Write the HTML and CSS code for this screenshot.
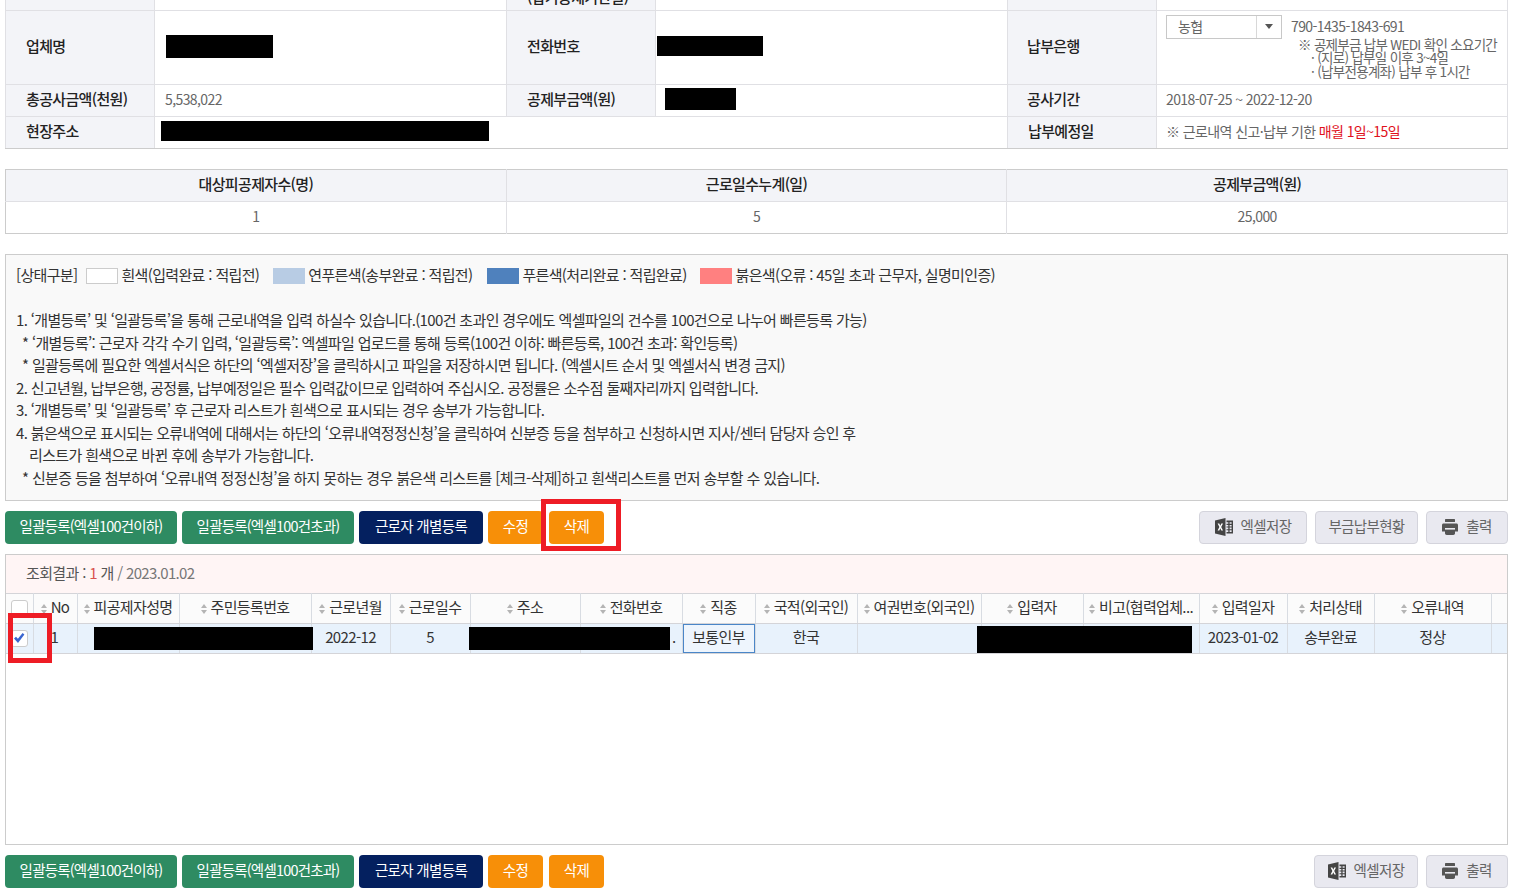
FILE: index.html
```html
<!DOCTYPE html>
<html lang="ko">
<head>
    <meta charset="UTF-8">
    <title>근로내역 신고</title>
    <link rel="stylesheet" href="styles.css">
</head>
<body>
    <div class="page">
        <!-- 신고 기본정보 -->
        <table class="info-table">
            <colgroup>
                <col class="col-th"><col class="col-td"><col class="col-th"><col class="col-td"><col class="col-th"><col>
            </colgroup>
            <tr class="row-cut">
                <th></th><td></td>
                <th><span class="cut-text">(납기공제기한일)</span></th><td></td>
                <th></th><td></td>
            </tr>
            <tr class="row-tall">
                <th>업체명</th>
                <td><span class="mask mask-company"></span></td>
                <th>전화번호</th>
                <td class="td-flush"><span class="mask mask-phone"></span></td>
                <th>납부은행</th>
                <td class="bank-cell">
                    <div class="bank-line">
                        <div class="bank-select"><span>농협</span><i class="bank-arrow"></i></div>
                        <span>790-1435-1843-691</span>
                    </div>
                    <div class="bank-note">※ 공제부금 납부 WEDI 확인 소요기간</div>
                    <div class="bank-note sub">· (지로) 납부일 이후 3~4일</div>
                    <div class="bank-note sub">· (납부전용계좌) 납부 후 1시간</div>
                </td>
            </tr>
            <tr>
                <th>총공사금액(천원)</th>
                <td>5,538,022</td>
                <th>공제부금액(원)</th>
                <td><span class="mask mask-amount"></span></td>
                <th>공사기간</th>
                <td class="td-last">2018-07-25 ~ 2022-12-20</td>
            </tr>
            <tr>
                <th>현장주소</th>
                <td colspan="3" class="td-addr"><span class="mask mask-addr"></span></td>
                <th>납부예정일</th>
                <td class="td-last">※ 근로내역 신고·납부 기한 <span class="red">매월 1일~15일</span></td>
            </tr>
        </table>

        <!-- 합계 -->
        <table class="sum-table">
            <tr>
                <th>대상피공제자수(명)</th>
                <th>근로일수누계(일)</th>
                <th>공제부금액(원)</th>
            </tr>
            <tr>
                <td>1</td>
                <td>5</td>
                <td>25,000</td>
            </tr>
        </table>

        <!-- 안내문 -->
        <div class="notice">
            <div class="legend">
                <span>[상태구분]</span>
                <i class="swatch sw-white"></i><span class="legend-text">흰색(입력완료 : 적립전)</span>
                <i class="swatch sw-light"></i><span class="legend-text">연푸른색(송부완료 : 적립전)</span>
                <i class="swatch sw-blue"></i><span class="legend-text">푸른색(처리완료 : 적립완료)</span>
                <i class="swatch sw-red"></i><span class="legend-text">붉은색(오류 : 45일 초과 근무자, 실명미인증)</span>
            </div>
            <p>1. ‘개별등록’ 및 ‘일괄등록’을 통해 근로내역을 입력 하실수 있습니다.(100건 초과인 경우에도 엑셀파일의 건수를 100건으로 나누어 빠른등록 가능)</p>
            <p class="ind">* ‘개별등록’: 근로자 각각 수기 입력, ‘일괄등록’: 엑셀파일 업로드를 통해 등록(100건 이하: 빠른등록, 100건 초과: 확인등록)</p>
            <p class="ind">* 일괄등록에 필요한 엑셀서식은 하단의 ‘엑셀저장’을 클릭하시고 파일을 저장하시면 됩니다. (엑셀시트 순서 및 엑셀서식 변경 금지)</p>
            <p>2. 신고년월, 납부은행, 공정률, 납부예정일은 필수 입력값이므로 입력하여 주십시오. 공정률은 소수점 둘째자리까지 입력합니다.</p>
            <p>3. ‘개별등록’ 및 ‘일괄등록’ 후 근로자 리스트가 흰색으로 표시되는 경우 송부가 가능합니다.</p>
            <p>4. 붉은색으로 표시되는 오류내역에 대해서는 하단의 ‘오류내역정정신청’을 클릭하여 신분증 등을 첨부하고 신청하시면 지사/센터 담당자 승인 후</p>
            <p class="ind2">리스트가 흰색으로 바뀐 후에 송부가 가능합니다.</p>
            <p class="ind">* 신분증 등을 첨부하여 ‘오류내역 정정신청’을 하지 못하는 경우 붉은색 리스트를 [체크-삭제]하고 흰색리스트를 먼저 송부할 수 있습니다.</p>
        </div>

        <!-- 상단 버튼 -->
        <div class="btn-bar bar-top">
            <div class="btn-group">
                <button class="btn btn-green w-bulk">일괄등록(엑셀100건이하)</button>
                <button class="btn btn-green w-bulk">일괄등록(엑셀100건초과)</button>
                <button class="btn btn-navy w-each">근로자 개별등록</button>
                <button class="btn btn-orange">수정</button>
                <button class="btn btn-orange btn-del">삭제</button>
            </div>
            <div class="btn-group gap-right">
                <button class="btn btn-gray w-excel">
                    <svg class="ico-excel" viewBox="0 0 18 18"><path d="M0 2.5 10.5 0v18L0 15.5z"/><path d="M11.5 2.5H18v13h-6.5v-1.6h1.8v-1.6h-1.8v-1.1h1.8V9.6h-1.8V8.5h1.8V6.9h-1.8V5.8h1.8V4.2h-1.8zM14.6 4.2v1.6h2v-1.6zM14.6 6.9v1.6h2V6.9zM14.6 9.6v1.6h2V9.6zM14.6 12.3v1.6h2v-1.6z"/><path d="M2.6 5.6h1.7l1 2.1 1-2.1H8L6.2 9 8 12.4H6.3l-1-2.2-1 2.2H2.6L4.4 9z" fill="#fff"/></svg>
                    엑셀저장
                </button>
                <button class="btn btn-gray w-status">부금납부현황</button>
                <button class="btn btn-gray w-print">
                    <svg class="ico-print" viewBox="0 0 16 16"><rect x="3" width="10" height="3" rx=".6"/><path d="M1.5 4.5h13c.8 0 1.5.7 1.5 1.5v6.5h-3v1.8c0 .9-.8 1.7-1.7 1.7H4.7c-.9 0-1.7-.8-1.7-1.7v-1.8H0V6c0-.8.7-1.5 1.5-1.5z"/><rect x="3" y="9" width="10" height="1.6" fill="#e9e9f0"/></svg>
                    출력
                </button>
            </div>
        </div>

        <!-- 조회결과 -->
        <div class="result-box">
            <div class="result-head">조회결과 : <span class="count">1</span> 개 <span class="date">/ 2023.01.02</span></div>
            <div class="grid-wrap">
                <table class="grid">
                    <colgroup>
                        <col class="c1"><col class="c2"><col class="c3"><col class="c4"><col class="c5"><col class="c6"><col class="c7"><col class="c8"><col class="c9"><col class="c10"><col class="c11"><col class="c12"><col class="c13"><col class="c14"><col class="c15"><col class="c16"><col>
                    </colgroup>
                    <tr class="grid-head">
                        <th><i class="chk"></i></th>
                        <th><i class="sort"></i>No</th>
                        <th><i class="sort"></i>피공제자성명</th>
                        <th><i class="sort"></i>주민등록번호</th>
                        <th><i class="sort"></i>근로년월</th>
                        <th><i class="sort"></i>근로일수</th>
                        <th><i class="sort"></i>주소</th>
                        <th><i class="sort"></i>전화번호</th>
                        <th><i class="sort"></i>직종</th>
                        <th><i class="sort"></i>국적(외국인)</th>
                        <th><i class="sort"></i>여권번호(외국인)</th>
                        <th><i class="sort"></i>입력자</th>
                        <th><i class="sort"></i>비고(협력업체...</th>
                        <th><i class="sort"></i>입력일자</th>
                        <th><i class="sort"></i>처리상태</th>
                        <th><i class="sort"></i>오류내역</th>
                        <th></th>
                    </tr>
                    <tr class="grid-row">
                        <td><i class="chk chk-on"><svg viewBox="0 0 12 12"><path d="M1 6.6 3 4.7l1.9 2.1L9.6 1 11.4 2.6 5 11z"/></svg></i></td>
                        <td class="td-no">1</td>
                        <td></td>
                        <td></td>
                        <td>2022-12</td>
                        <td>5</td>
                        <td></td>
                        <td class="td-dot">.</td>
                        <td class="td-focus">보통인부</td>
                        <td>한국</td>
                        <td></td>
                        <td></td>
                        <td></td>
                        <td>2023-01-02</td>
                        <td>송부완료</td>
                        <td>정상</td>
                        <td></td>
                    </tr>
                </table>
                <span class="mask grid-mask mask-name"></span>
                <span class="mask grid-mask mask-home"></span>
                <span class="mask grid-mask mask-writer"></span>
            </div>
        </div>

        <!-- 하단 버튼 -->
        <div class="btn-bar bar-bottom">
            <div class="btn-group">
                <button class="btn btn-green w-bulk">일괄등록(엑셀100건이하)</button>
                <button class="btn btn-green w-bulk">일괄등록(엑셀100건초과)</button>
                <button class="btn btn-navy w-each">근로자 개별등록</button>
                <button class="btn btn-orange">수정</button>
                <button class="btn btn-orange btn-del">삭제</button>
            </div>
            <div class="btn-group gap-right">
                <button class="btn btn-gray w-excel2">
                    <svg class="ico-excel" viewBox="0 0 18 18"><path d="M0 2.5 10.5 0v18L0 15.5z"/><path d="M11.5 2.5H18v13h-6.5v-1.6h1.8v-1.6h-1.8v-1.1h1.8V9.6h-1.8V8.5h1.8V6.9h-1.8V5.8h1.8V4.2h-1.8zM14.6 4.2v1.6h2v-1.6zM14.6 6.9v1.6h2V6.9zM14.6 9.6v1.6h2V9.6zM14.6 12.3v1.6h2v-1.6z"/><path d="M2.6 5.6h1.7l1 2.1 1-2.1H8L6.2 9 8 12.4H6.3l-1-2.2-1 2.2H2.6L4.4 9z" fill="#fff"/></svg>
                    엑셀저장
                </button>
                <button class="btn btn-gray w-print">
                    <svg class="ico-print" viewBox="0 0 16 16"><rect x="3" width="10" height="3" rx=".6"/><path d="M1.5 4.5h13c.8 0 1.5.7 1.5 1.5v6.5h-3v1.8c0 .9-.8 1.7-1.7 1.7H4.7c-.9 0-1.7-.8-1.7-1.7v-1.8H0V6c0-.8.7-1.5 1.5-1.5z"/><rect x="3" y="9" width="10" height="1.6" fill="#e9e9f0"/></svg>
                    출력
                </button>
            </div>
        </div>

        <!-- 빨간 강조 표시 -->
        <div class="mark mark-delete"></div>
        <div class="mark mark-check"></div>
    </div>
</body>
</html>
```

FILE: styles.css
```css
* {
    margin: 0;
    padding: 0;
    box-sizing: border-box;
}

html, body {
    height: 896px;
    overflow: hidden;
    background-color: #fff;
}

body {
    font-family: "Noto Sans CJK KR", "Noto Sans", sans-serif;
    font-size: 15px;
    letter-spacing: -0.65px;
    color: #333;
}

.page {
    position: relative;
    width: 1503px;
    margin-left: 5px;
}

table {
    width: 100%;
    border-collapse: collapse;
    table-layout: fixed;
}

/* 기본정보 */
.info-table {
    border: 1px solid #ccc;
    border-top: none;
}
.col-th {
    width: 149px;
}
.col-td {
    width: 352px;
}
.info-table th, .info-table td {
    border: 1px solid #e0e0e4;
    height: 32px;
    padding: 0 10px 2px;
    line-height: 16px;
    text-align: left;
}
.info-table tr:last-child th, .info-table tr:last-child td {
    border-bottom-color: #ccc;
}
.info-table th {
    padding-left: 20px;
    background-color: #f3f4f8;
    color: #222;
    font-weight: 500;
}
.info-table th:nth-of-type(3) {
    padding-left: 19px;
}
.info-table td {
    color: #666;
    font-size: 14px;
    letter-spacing: -0.6px;
}
.info-table .td-last {
    padding-left: 9px;
}
.info-table .row-cut th, .info-table .row-cut td {
    height: 10px;
    padding-bottom: 0;
    border-top: none;
    vertical-align: top;
}
.cut-text {
    display: block;
    height: 0;
    margin-top: -3px;
    line-height: 0;
    color: #222;
    white-space: nowrap;
}
.info-table .row-tall th, .info-table .row-tall td {
    height: 74px;
}
.info-table .td-flush {
    padding-left: 0;
}
.info-table .td-addr {
    padding-left: 5px;
}
.red {
    color: #e0101c;
}

.mask {
    display: inline-block;
    vertical-align: middle;
    background-color: #000;
}
.mask-company {
    width: 107px;
    height: 23px;
    margin-left: 1px;
}
.mask-phone {
    width: 106px;
    height: 20px;
    margin-left: 1px;
}
.mask-amount {
    width: 71px;
    height: 22px;
    margin-left: -1px;
}
.mask-addr {
    width: 328px;
    height: 20px;
    margin-left: 1px;
}

/* 납부은행 */
.info-table .bank-cell {
    vertical-align: top;
    padding-top: 4px;
    padding-left: 9px;
    line-height: 13px;
}
.bank-line {
    display: flex;
    align-items: center;
    gap: 9px;
    margin-bottom: -1px;
}
.bank-select {
    display: flex;
    align-items: center;
    justify-content: space-between;
    width: 116px;
    height: 24px;
    padding-left: 11px;
    border: 1px solid #c8c8c8;
    background-color: #fff;
}
.bank-arrow {
    display: flex;
    align-items: center;
    justify-content: center;
    width: 25px;
    height: 22px;
    border-left: 1px solid #d8d8d8;
}
.bank-arrow::after {
    content: '';
    border-top: 5px solid #555;
    border-left: 4px solid transparent;
    border-right: 4px solid transparent;
}
.bank-note {
    padding-left: 132px;
    height: 13.5px;
    line-height: 13.5px;
    font-size: 13.5px;
    letter-spacing: -0.7px;
    white-space: nowrap;
}
.bank-note.sub {
    padding-left: 145px;
}

/* 합계 */
.sum-table {
    margin-top: 20px;
    border: 1px solid #ccc;
}
.sum-table th, .sum-table td {
    height: 32px;
    text-align: center;
    border-right: 1px solid #e0e0e4;
}
.sum-table th {
    padding-bottom: 4px;
    background-color: #f3f4f8;
    color: #222;
    font-weight: 500;
    border-bottom: 1px solid #e0e0e4;
}
.sum-table td {
    padding-bottom: 2px;
    color: #666;
    font-size: 14px;
    letter-spacing: -0.6px;
}

/* 안내문 */
.notice {
    margin-top: 20px;
    height: 247px;
    padding: 10px 10px 0;
    background-color: #f9f9f9;
    border: 1px solid #ccc;
    line-height: 22.5px;
}
.legend {
    display: flex;
    align-items: center;
    margin-bottom: 22.5px;
    height: 22px;
}
.swatch {
    display: block;
    width: 32px;
    height: 16px;
    margin-right: 3px;
}
.sw-white {
    margin-left: 9px;
    background-color: #fff;
    border: 1px solid #ccc;
}
.sw-light {
    margin-left: 14px;
    background-color: #b8cce4;
}
.sw-blue {
    margin-left: 15px;
    background-color: #4f81bd;
}
.sw-red {
    margin-left: 13px;
    margin-right: 4px;
    background-color: #ff8080;
}
.ind {
    padding-left: 6px;
}
.ind2 {
    padding-left: 13px;
}

/* 버튼 */
.btn-bar {
    display: flex;
    justify-content: space-between;
    height: 33px;
}
.bar-top {
    margin-top: 10px;
}
.bar-bottom {
    margin-top: 10px;
}
.btn-group {
    display: flex;
    gap: 5px;
}
.gap-right {
    gap: 8px;
}
.btn {
    display: flex;
    align-items: center;
    justify-content: center;
    gap: 8px;
    width: 55px;
    height: 33px;
    padding-bottom: 4px;
    border: none;
    border-radius: 4px;
    font-family: inherit;
    font-size: 14.5px;
    letter-spacing: -0.65px;
    color: #fff;
}
.btn-del {
    margin-left: 1px;
}
.w-bulk {
    width: 172px;
    letter-spacing: -0.8px;
}
.w-each {
    width: 124px;
}
.w-excel {
    width: 108px;
}
.w-excel2 {
    width: 104px;
}
.w-status {
    width: 103px;
}
.w-print {
    width: 82px;
}
.btn-green {
    background-color: #2e8b62;
}
.btn-navy {
    background-color: #04205f;
}
.btn-orange {
    background-color: #f78f08;
}
.btn-gray {
    background-color: #e9e9f0;
    border: 1px solid #d4d4dc;
    color: #666;
}
.ico-excel {
    width: 18px;
    height: 18px;
    margin-top: 3px;
    fill: #444;
}
.ico-print {
    width: 16px;
    height: 16px;
    margin-top: 4px;
    fill: #555;
}

/* 조회결과 */
.result-box {
    margin-top: 10px;
    height: 291px;
    border: 1px solid #ccc;
}
.result-head {
    height: 38px;
    padding-left: 20px;
    line-height: 36px;
    background-color: #fff5f5;
    color: #555;
}
.count {
    color: #d9534f;
}
.date {
    color: #777;
}
.grid-wrap {
    position: relative;
}
.c1 { width: 27px; }
.c2 { width: 44px; }
.c3 { width: 102px; }
.c4 { width: 132px; }
.c5 { width: 79px; }
.c6 { width: 80px; }
.c7 { width: 110px; }
.c8 { width: 102px; }
.c9 { width: 73px; }
.c10 { width: 102px; }
.c11 { width: 124px; }
.c12 { width: 102px; }
.c13 { width: 116px; }
.c14 { width: 88px; }
.c15 { width: 87px; }
.c16 { width: 117px; }

.grid th, .grid td {
    padding-bottom: 3px;
    text-align: center;
    white-space: nowrap;
    overflow: hidden;
    border-right: 1px solid #d8dce2;
    border-top: 1px solid #d4d4d8;
    border-bottom: 1px solid #d4d4d8;
}
.grid th:last-child, .grid td:last-child {
    border-right: none;
}
.grid th {
    height: 30px;
    background-color: #fbfbfb;
    font-weight: 400;
    color: #333;
}
.grid td {
    height: 30px;
    background-color: #e8f2fc;
    color: #333;
}
.grid .td-no {
    text-align: left;
    padding-left: 17px;
}
.grid .td-dot {
    text-align: right;
    padding-right: 6px;
}
.grid .td-focus {
    box-shadow: inset 0 0 0 1px #4a86c8;
    background-color: #eef5fd;
}
.sort {
    display: inline-block;
    width: 6px;
    height: 10px;
    margin-right: 4px;
    vertical-align: -1px;
    position: relative;
}
.sort::before, .sort::after {
    content: '';
    position: absolute;
    left: 0;
    border-left: 3px solid transparent;
    border-right: 3px solid transparent;
}
.sort::before {
    top: 0;
    border-bottom: 4px solid #b4b4b4;
}
.sort::after {
    bottom: 0;
    border-top: 4px solid #b4b4b4;
}
.chk {
    display: inline-block;
    width: 17px;
    height: 17px;
    border: 1px solid #ccc;
    border-radius: 3px;
    background-color: #fff;
    vertical-align: middle;
}
.chk svg {
    display: block;
    width: 12px;
    height: 12px;
    margin: 1px;
    fill: #3a66d0;
}
.grid-mask {
    position: absolute;
}
.mask-name {
    left: 88px;
    top: 34px;
    width: 219px;
    height: 23px;
}
.mask-home {
    left: 463px;
    top: 34px;
    width: 201px;
    height: 23px;
}
.mask-writer {
    left: 971px;
    top: 33px;
    width: 215px;
    height: 27px;
}

/* 빨간 강조 */
.mark {
    position: absolute;
    border: 5px solid #ee1c25;
}
.mark-delete {
    left: 536px;
    top: 499px;
    width: 80px;
    height: 52px;
}
.mark-check {
    left: 3px;
    top: 613px;
    width: 44px;
    height: 50px;
}
```
